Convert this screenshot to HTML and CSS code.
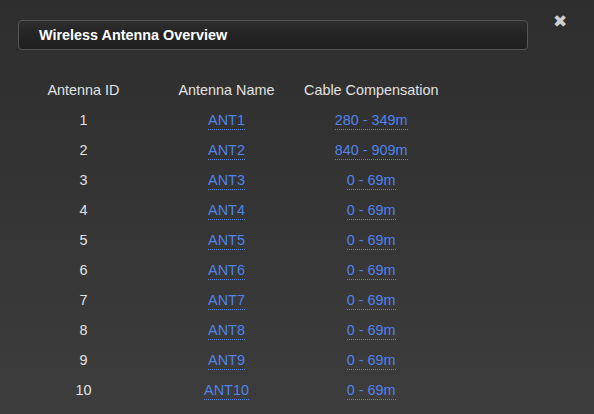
FILE: index.html
```html
<!DOCTYPE html>
<html>
<head>
<meta charset="utf-8">
<link rel="stylesheet" href="styles.css">
</head>
<body>
<div class="dialog">
  <div class="topline">
    <div class="titlebar">Wireless Antenna Overview</div>
    <span class="close">✖</span>
  </div>
  <table class="ant">
    <thead>
      <tr><th class="c1">Antenna ID</th><th class="c2">Antenna Name</th><th class="c3">Cable Compensation</th></tr>
    </thead>
    <tbody>
      <tr><td>1</td><td><a>ANT1</a></td><td><a>280 - 349m</a></td></tr>
      <tr><td>2</td><td><a>ANT2</a></td><td><a>840 - 909m</a></td></tr>
      <tr><td>3</td><td><a>ANT3</a></td><td><a>0 - 69m</a></td></tr>
      <tr><td>4</td><td><a>ANT4</a></td><td><a>0 - 69m</a></td></tr>
      <tr><td>5</td><td><a>ANT5</a></td><td><a>0 - 69m</a></td></tr>
      <tr><td>6</td><td><a>ANT6</a></td><td><a>0 - 69m</a></td></tr>
      <tr><td>7</td><td><a>ANT7</a></td><td><a>0 - 69m</a></td></tr>
      <tr><td>8</td><td><a>ANT8</a></td><td><a>0 - 69m</a></td></tr>
      <tr><td>9</td><td><a>ANT9</a></td><td><a>0 - 69m</a></td></tr>
      <tr><td>10</td><td><a>ANT10</a></td><td><a>0 - 69m</a></td></tr>
    </tbody>
  </table>
</div>
</body>
</html>
```
FILE: styles.css
```css
html, body {
  margin: 0;
  padding: 0;
}
body {
  width: 594px;
  height: 414px;
  overflow: hidden;
  background: linear-gradient(to bottom, #2e2e2e 0%, #333333 40%, #3d3d3d 100%);
  font-family: "Liberation Sans", Arial, sans-serif;
  font-size: 14.4px;
  color: #e2e2e2;
}
.dialog {
  padding: 20px 0 0 18px;
}
.topline {
  display: flex;
  align-items: flex-start;
}
.titlebar {
  width: 488px;
  height: 28px;
  border: 1px solid #555555;
  border-radius: 4px;
  background: linear-gradient(to bottom, #2e2e2e 0%, #242424 45%, #1f1f1f 100%);
  color: #ffffff;
  font-weight: bold;
  font-size: 14.4px;
  line-height: 28px;
  padding-left: 20px;
}
.close {
  margin-left: 25px;
  margin-top: -8px;
  color: #cfcfcf;
  font-size: 17px;
  line-height: 18px;
  font-family: "DejaVu Sans", sans-serif;
}
.ant {
  border-collapse: collapse;
  margin-top: 25px;
}
.ant th, .ant td {
  padding: 0;
  height: 30px;
  text-align: center;
  font-weight: normal;
  vertical-align: middle;
  white-space: nowrap;
}
.c1 { width: 131px; }
.c2 { width: 155px; }
.c3 { width: 130px; }
.ant a {
  color: #5083ec;
  text-decoration: none;
  border-bottom: 1px dotted #5083ec;
  padding-bottom: 1px;
}
```
